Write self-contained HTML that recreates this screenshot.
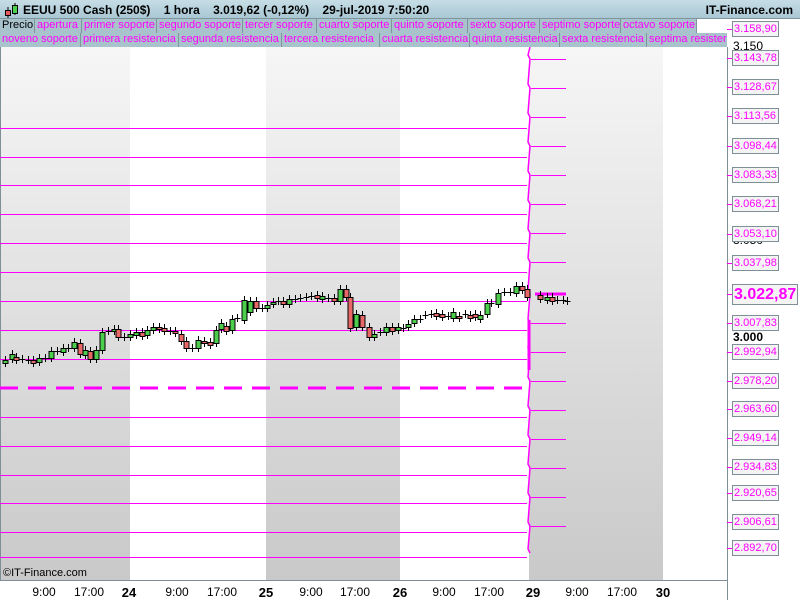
<!DOCTYPE html>
<html><head><meta charset="utf-8"><style>
*{margin:0;padding:0;box-sizing:border-box}
body{width:800px;height:600px;overflow:hidden;background:#fff;font-family:"Liberation Sans",Arial,sans-serif;position:relative}
#hdr{position:absolute;left:0;top:0;width:800px;height:19px;background:linear-gradient(#c6dde6,#a9c7d3);border-bottom:1px solid #7f949c}
#hdr .t{position:absolute;left:23px;top:3px;font-size:12px;font-weight:bold;color:#000;white-space:pre}
#hdr .r{position:absolute;right:7px;top:3px;font-size:12px;font-weight:bold}
.row{position:absolute;left:0;height:14px;width:727px;overflow:hidden;background:#fff}
.row span{position:absolute;top:0;display:block;height:14px;line-height:13px;font-size:11px;color:#f0f;background:#a9c3cc;border-right:1px solid #7f949c;padding-left:2px;white-space:nowrap;overflow:hidden}
.lab{position:absolute;z-index:3;left:732px;width:47px;height:16px;border:1px solid #7f8f98;background:#f4f4f4;color:#f0f;font-size:11px;line-height:14px;padding-left:1px;white-space:nowrap;overflow:hidden}
.tk{position:absolute;z-index:3;left:727px;width:5px;height:1px;background:#f0f}
.bl{position:absolute;z-index:2;left:733px;font-size:12px;color:#000}
.bx{position:absolute;top:585px;font-size:12px;color:#000;transform:translateX(-50%)}
.bx b{font-size:13px}
</style></head><body>
<div id="hdr"><svg style="position:absolute;left:3px;top:2px" width="16" height="16"><line x1="5" y1="5" x2="5" y2="16" stroke="#000"/><rect x="2.5" y="8.5" width="5" height="5" fill="#e85a5a" stroke="#000"/><line x1="12" y1="1" x2="12" y2="13" stroke="#000"/><rect x="9.5" y="3.5" width="5" height="8" fill="#4ccd4c" stroke="#000"/></svg><div class="t">EEUU 500 Cash (250$)    1 hora    3.019,62 (-0,12%)    29-jul-2019 7:50:20</div><div class="r">IT-Finance.com</div></div>
<div class="row" style="top:19px"><span style="color:#000;left:0;width:35px">Precio</span><span style="left:35px;width:47px">apertura</span><span style="left:82px;width:75px">primer soporte</span><span style="left:157px;width:86px">segundo soporte</span><span style="left:243px;width:74px">tercer soporte</span><span style="left:317px;width:75px">cuarto soporte</span><span style="left:392px;width:76px">quinto soporte</span><span style="left:468px;width:72px">sexto soporte</span><span style="left:540px;width:81px">septimo soporte</span><span style="left:621px;width:76px">octavo soporte</span></div>
<div class="row" style="top:33px;background:#a9c3cc"><span style="left:0;width:81px">noveno soporte</span><span style="left:81px;width:98px">primera resistencia</span><span style="left:179px;width:103px">segunda resistencia</span><span style="left:282px;width:98px">tercera resistencia</span><span style="left:380px;width:90px">cuarta resistencia</span><span style="left:470px;width:90px">quinta resistencia</span><span style="left:560px;width:87px">sexta resistencia</span><span style="left:647px;width:90px">septima resistencia</span></div>
<svg id="ch" style="position:absolute;left:0;top:47px" width="800" height="553">
<defs><linearGradient id="g" x1="0" y1="0" x2="0" y2="1"><stop offset="0" stop-color="#f6f6f6"/><stop offset="1" stop-color="#c9c9c9"/></linearGradient></defs>
<rect x="0" y="0" width="130" height="533" fill="url(#g)"/>
<rect x="266" y="0" width="134" height="533" fill="url(#g)"/>
<rect x="529" y="0" width="134" height="533" fill="url(#g)"/>
<line x1="0.5" y1="0" x2="0.5" y2="533" stroke="#7f8f98"/>
<line x1="727.5" y1="0" x2="727.5" y2="553" stroke="#7f8f98"/>
<line x1="0" y1="533.5" x2="728" y2="533.5" stroke="#7f8f98"/>
<g id="lines" stroke="#f0f" stroke-width="1"></g>
<g id="cd"></g>
</svg>
<div class="tk" style="top:29px"></div><div class="lab" style="top:21px">3.158,90</div>
<div class="bl" style="top:39px">3.150</div>
<div class="tk" style="top:58px"></div><div class="lab" style="top:50px">3.143,78</div>
<div class="tk" style="top:87px"></div><div class="lab" style="top:79px">3.128,67</div>
<div class="tk" style="top:116px"></div><div class="lab" style="top:108px">3.113,56</div>
<div class="tk" style="top:146px"></div><div class="lab" style="top:138px">3.098,44</div>
<div class="tk" style="top:175px"></div><div class="lab" style="top:167px">3.083,33</div>
<div class="tk" style="top:204px"></div><div class="lab" style="top:196px">3.068,21</div>
<div class="bl" style="top:233px">3.050</div>
<div class="tk" style="top:234px"></div><div class="lab" style="top:226px">3.053,10</div>
<div class="tk" style="top:263px"></div><div class="lab" style="top:255px">3.037,98</div>
<div class="tk" style="top:294px"></div><div class="lab" style="top:284px;width:66px;height:21px;font-size:16px;font-weight:bold;line-height:19px">3.022,87</div>
<div class="tk" style="top:323px"></div><div class="lab" style="top:315px">3.007,83</div>
<div class="bl" style="top:330px;font-weight:bold">3.000</div>
<div class="tk" style="top:352px"></div><div class="lab" style="top:344px">2.992,94</div>
<div class="tk" style="top:381px"></div><div class="lab" style="top:373px">2.978,20</div>
<div class="tk" style="top:409px"></div><div class="lab" style="top:401px">2.963,60</div>
<div class="tk" style="top:438px"></div><div class="lab" style="top:430px">2.949,14</div>
<div class="tk" style="top:467px"></div><div class="lab" style="top:459px">2.934,83</div>
<div class="tk" style="top:493px"></div><div class="lab" style="top:485px">2.920,65</div>
<div class="tk" style="top:522px"></div><div class="lab" style="top:514px">2.906,61</div>
<div class="tk" style="top:548px"></div><div class="lab" style="top:540px">2.892,70</div>
<div style="position:absolute;left:3px;top:567px;font-size:11px">©IT-Finance.com</div>
<div class="bx" style="left:44px">9:00</div><div class="bx" style="left:89px">17:00</div><div class="bx" style="left:129px"><b>24</b></div>
<div class="bx" style="left:177px">9:00</div><div class="bx" style="left:222px">17:00</div><div class="bx" style="left:266px"><b>25</b></div>
<div class="bx" style="left:311px">9:00</div><div class="bx" style="left:355px">17:00</div><div class="bx" style="left:400px"><b>26</b></div>
<div class="bx" style="left:444px">9:00</div><div class="bx" style="left:489px">17:00</div><div class="bx" style="left:533px"><b>29</b></div>
<div class="bx" style="left:577px">9:00</div><div class="bx" style="left:622px">17:00</div><div class="bx" style="left:663px"><b>30</b></div>
<script>
var NS="http://www.w3.org/2000/svg",O=47;
function el(p,t,a){var e=document.createElementNS(NS,t);for(var k in a)e.setAttribute(k,a[k]);p.appendChild(e);return e;}
var L=document.getElementById('lines');
[128,157,185,214,243,272,301,330,359,417,446,475,503,532,557].forEach(function(y){el(L,'line',{x1:0,x2:527,y1:y-O+.5,y2:y-O+.5});});
el(L,'line',{x1:0,x2:527,y1:388-O,y2:388-O,'stroke-width':3,'stroke-dasharray':'18,10'});
[59,88,117,146,175,204,233,262,323,352,381,410,439,468,497,526].forEach(function(y){el(L,'line',{x1:531,x2:566,y1:y-O+.5,y2:y-O+.5});});
el(L,'line',{x1:535,x2:566,y1:294-O,y2:294-O,'stroke-width':3});
var pts=[[530,0]];var R=[59,88,117,146,175,204,233,262,294,323,352,381,410,439,468,497,526,553];
R.forEach(function(y){pts.push([528,y-O-4]);pts.push([530,y-O]);});
el(L,'polyline',{points:pts.map(function(p){return p.join(',')}).join(' '),fill:'none','stroke-width':1.5});
el(L,'line',{x1:529,x2:529,y1:320-O,y2:370-O,'stroke-width':3});
var C=document.getElementById('cd');
var c=[[5,360,363,1],[12,354,359,1],[16,357,360,0],[22,359,359],[28,360,360],[33,360,363,0],[39,358,362,1],[45,358,358],[51,351,358,1],[57,351,351],[63,348,352,1],[68,348,348],[74,342,348,1],[80,343,354,0],[85,350,355,1],[90,351,359,0],[96,350,359,1],[102,332,350,1],[108,331,331],[114,329,331,1],[118,329,337,0],[124,337,337],[130,334,337,1],[136,332,335,1],[142,332,336,0],[147,330,335,1],[153,327,330,1],[159,327,329,0],[164,328,331,0],[170,331,331],[175,331,333,0],[181,334,341,0],[186,341,348,0],[192,348,348],[198,340,348,1],[204,341,343,0],[210,342,345,0],[216,330,343,1],[221,323,329,1],[226,326,331,0],[232,319,330,1],[237,318,318],[244,300,320,1],[250,301,312,1],[256,301,308,0],[262,308,308],[267,305,308,1],[273,302,304,1],[278,301,301],[283,301,304,0],[289,299,304,1],[295,299,299],[300,298,298],[306,297,297],[311,296,296],[317,295,298,0],[322,296,299,1],[328,298,298],[334,298,301,0],[340,289,301,1],[346,289,297,0],[350,297,328,0],[356,314,327,1],[362,315,327,0],[369,327,337,0],[374,334,337,1],[380,332,332],[386,327,332,1],[392,327,331,0],[398,327,330,1],[403,328,328],[408,324,327,1],[414,319,323,1],[420,319,319],[425,315,315],[431,314,314],[436,313,316,0],[442,314,317,0],[448,316,316],[453,312,318,1],[459,316,318,0],[465,314,314],[470,315,318,0],[475,314,317,0],[480,315,319,1],[487,303,314,1],[491,303,303],[498,293,304,1],[504,292,292],[510,292,292],[516,286,293,1],[522,286,290,0],[527,289,297,0],[540,295,299,0],[547,297,300,1],[552,297,301,0],[557,300,300],[563,300,300],[567,301,301]];
c.forEach(function(d){var x=d[0]+.5,t=d[1]-O,b=d[2]-O;el(C,'line',{x1:x,x2:x,y1:t-4,y2:b+4,stroke:'#000'});
if(d.length<4){el(C,'line',{x1:x-3,x2:x+3,y1:t+.5,y2:t+.5,stroke:'#000'});}
else el(C,'rect',{x:x-2.5,y:t+.5,width:5,height:Math.max(b-t,2),fill:d[3]?'#4ccd4c':'#e86868',stroke:'#000'});});
</script>
</body></html>
